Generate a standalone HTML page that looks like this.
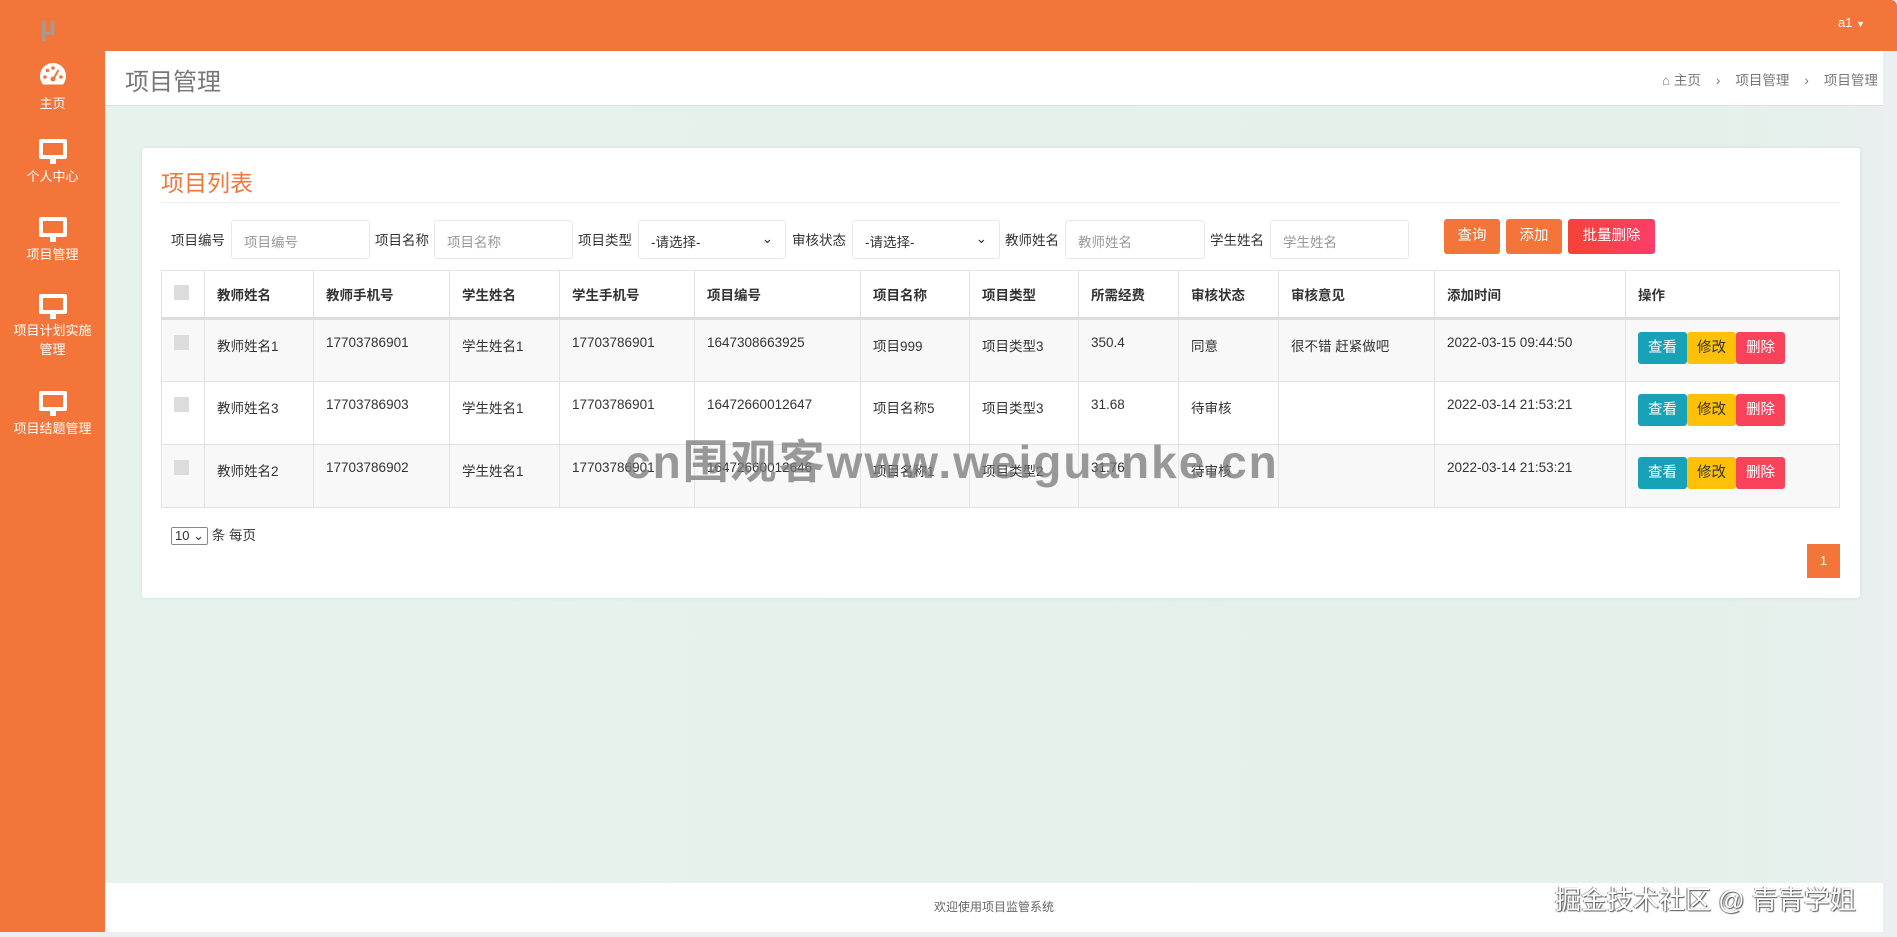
<!DOCTYPE html>
<html><head><meta charset="utf-8"><style>
*{box-sizing:border-box;margin:0;padding:0}
body{width:1897px;height:937px;background:#eceff1;font-family:"Liberation Sans","Noto Sans CJK SC",sans-serif;position:relative;overflow:hidden;color:#333}
.a{position:absolute}
.top{left:0;top:0;width:1897px;height:51px;background:#f37539;border-radius:6px 6px 0 0}
.side{left:0;top:0;width:105px;height:932px;background:#f37539}
.nav{position:absolute;left:0;width:105px;text-align:center;color:#fff;font-size:13px}
.mon{width:28px;height:20px;border:4px solid #fff;border-radius:2px;margin:0 auto;position:relative;background:transparent}
.mon:after{content:"";position:absolute;left:7px;top:16px;width:6px;height:5px;background:#fff}
.hdr{left:105px;top:51px;width:1778px;height:55px;background:#fff;border-bottom:1px solid #dde}
.content{left:105px;top:107px;width:1778px;height:776px;background:linear-gradient(90deg,#e6f2ec 0%,#e4f1ea 90%,#e8efee 100%)}
.card{left:142px;top:148px;width:1718px;height:450px;background:#fff;border-radius:3px;box-shadow:0 0 4px rgba(0,0,0,.08)}
.lbl{font-size:13.5px;color:#333;top:229px}
.inp{top:220px;height:39px;border:1px solid #e8e8e8;border-radius:3px;font-size:13.5px;color:#999;padding:10px 12px;background:#fff}
.sel{color:#333}
.btn{top:219px;height:35px;color:#fff;font-size:14.5px;text-align:center;line-height:35px;border-radius:3px}
table{border-collapse:collapse;position:absolute;left:161px;top:270px;width:1679px;font-size:13.5px;color:#333}
td,th{border:1px solid #e2e2e2;text-align:left;vertical-align:top;padding:15px 12px 0}
th{height:48px;font-weight:bold;vertical-align:middle;padding-top:0;border-bottom:3px solid #ddd}
td{height:63px}
tr.g td{background:#f8f8f8}
.cb{display:inline-block;width:15px;height:15px;background:#dcdcdc}
.ab{display:inline-block;width:49px;height:32px;line-height:32px;text-align:center;color:#fff;font-size:14.5px;border-radius:3px;margin-top:-3px}
.foot{left:105px;top:883px;width:1778px;height:49px;background:#fff;text-align:center;font-size:12px;color:#666;line-height:49px}
</style></head><body>
<div class="a side"></div>
<div class="a top"></div>
<div class="a" style="left:40px;top:12px;font-size:28px;font-weight:bold;color:#a8998d;line-height:28px">µ</div>
<div class="nav" style="top:62px">
<svg width="28" height="24" viewBox="0 0 28 24"><path d="M14 1C6.8 1 1 6.8 1 14c0 3.2 1.1 6.1 3 8.5h20c1.9-2.4 3-5.3 3-8.5C27 6.8 21.2 1 14 1z" fill="#fff"/><circle cx="6" cy="15" r="1.8" fill="#f37539"/><circle cx="8.5" cy="8.5" r="1.8" fill="#f37539"/><circle cx="14" cy="6" r="1.8" fill="#f37539"/><circle cx="22" cy="15" r="1.8" fill="#f37539"/><path d="M19.5 8 L15 16" stroke="#f37539" stroke-width="2"/><circle cx="14" cy="17" r="2.5" fill="#f37539"/></svg>
<div style="margin-top:4px">主页</div></div>
<div class="nav" style="top:139px"><div class="mon"></div><div style="margin-top:7px">个人中心</div></div>
<div class="nav" style="top:217px"><div class="mon"></div><div style="margin-top:7px">项目管理</div></div>
<div class="nav" style="top:294px"><div class="mon"></div><div style="margin-top:7px;line-height:19px">项目计划实施<br>管理</div></div>
<div class="nav" style="top:391px"><div class="mon"></div><div style="margin-top:7px">项目结题管理</div></div>
<div class="a" style="left:1838px;top:15px;color:#fff;font-size:13px">a1 <span style="font-size:9px">▼</span></div>
<div class="a hdr"></div>
<div class="a" style="left:125px;top:62px;font-size:24px;color:#777">项目管理</div>
<div class="a" style="left:1662px;top:69px;font-size:13.5px;color:#777">&#8962; 主页 &nbsp;&nbsp;&nbsp;›&nbsp;&nbsp;&nbsp; 项目管理 &nbsp;&nbsp;&nbsp;›&nbsp;&nbsp;&nbsp; 项目管理</div>
<div class="a content"></div>
<div class="a card"></div>
<div class="a" style="left:161px;top:164px;font-size:23px;color:#f37539">项目列表</div>
<div class="a" style="left:161px;top:202px;width:1679px;height:1px;background:#eee"></div>
<div class="a lbl" style="left:171px">项目编号</div><div class="a inp" style="left:231px;width:139px">项目编号</div>
<div class="a lbl" style="left:375px">项目名称</div><div class="a inp" style="left:434px;width:139px">项目名称</div>
<div class="a lbl" style="left:578px">项目类型</div><div class="a inp sel" style="left:638px;width:148px">-请选择-<span style="float:right">⌄</span></div>
<div class="a lbl" style="left:792px">审核状态</div><div class="a inp sel" style="left:852px;width:148px">-请选择-<span style="float:right">⌄</span></div>
<div class="a lbl" style="left:1005px">教师姓名</div><div class="a inp" style="left:1065px;width:140px">教师姓名</div>
<div class="a lbl" style="left:1210px">学生姓名</div><div class="a inp" style="left:1270px;width:139px">学生姓名</div>
<div class="a btn" style="left:1444px;width:56px;background:#f37539">查询</div>
<div class="a btn" style="left:1506px;width:56px;background:#f37539">添加</div>
<div class="a btn" style="left:1568px;width:87px;background:linear-gradient(90deg,#f44336,#fd3d6a)">批量删除</div>
<table>
<tr><th style="width:43px"><span class="cb"></span></th><th style="width:109px">教师姓名</th><th style="width:136px">教师手机号</th><th style="width:110px">学生姓名</th><th style="width:135px">学生手机号</th><th style="width:166px">项目编号</th><th style="width:109px">项目名称</th><th style="width:109px">项目类型</th><th style="width:100px">所需经费</th><th style="width:100px">审核状态</th><th style="width:156px">审核意见</th><th style="width:191px">添加时间</th><th>操作</th></tr>
<tr class="g"><td><span class="cb"></span></td><td>教师姓名1</td><td>17703786901</td><td>学生姓名1</td><td>17703786901</td><td>1647308663925</td><td>项目999</td><td>项目类型3</td><td>350.4</td><td>同意</td><td>很不错 赶紧做吧</td><td>2022-03-15 09:44:50</td><td><span class="ab" style="background:#17a2b8">查看</span><span class="ab" style="background:#ffc107;color:#333">修改</span><span class="ab" style="background:#f8435a">删除</span></td></tr>
<tr><td><span class="cb"></span></td><td>教师姓名3</td><td>17703786903</td><td>学生姓名1</td><td>17703786901</td><td>16472660012647</td><td>项目名称5</td><td>项目类型3</td><td>31.68</td><td>待审核</td><td></td><td>2022-03-14 21:53:21</td><td><span class="ab" style="background:#17a2b8">查看</span><span class="ab" style="background:#ffc107;color:#333">修改</span><span class="ab" style="background:#f8435a">删除</span></td></tr>
<tr class="g"><td><span class="cb"></span></td><td>教师姓名2</td><td>17703786902</td><td>学生姓名1</td><td>17703786901</td><td>16472660012646</td><td>项目名称1</td><td>项目类型2</td><td>31.76</td><td>待审核</td><td></td><td>2022-03-14 21:53:21</td><td><span class="ab" style="background:#17a2b8">查看</span><span class="ab" style="background:#ffc107;color:#333">修改</span><span class="ab" style="background:#f8435a">删除</span></td></tr>
</table>
<div class="a" style="left:171px;top:524px;font-size:13.5px"><span style="display:inline-block;border:1px solid #888;border-radius:2px;padding:0 3px;font-size:13px">10 ⌄</span> 条 每页</div>
<div class="a" style="left:1807px;top:544px;width:33px;height:34px;background:#f37539;color:#fff;font-size:13px;text-align:center;line-height:34px">1</div>
<div class="a" style="left:625px;top:426px;font-size:46px;font-weight:bold;color:rgba(120,120,120,.75);letter-spacing:2px;white-space:nowrap">cn围观客www.weiguanke.cn</div>
<div class="a foot">欢迎使用项目监管系统</div>
<div class="a" style="left:1555px;top:880px;font-size:26px;color:#fff;text-shadow:1px 1px 1px #555,-1px 0 1px #777;white-space:nowrap">掘金技术社区 @ 青青学姐</div>
</body></html>
